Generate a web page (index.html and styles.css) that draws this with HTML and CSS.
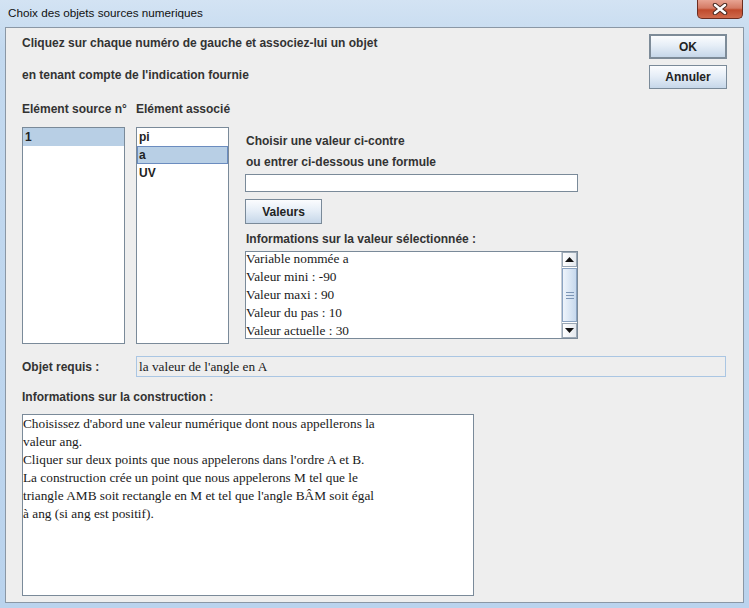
FILE: index.html
```html
<!DOCTYPE html>
<html lang="fr">
<head>
    <meta charset="UTF-8">
    <title>Choix des objets sources numeriques</title>
    <link rel="stylesheet" href="styles.css">
</head>
<body>
    <div class="window">
        <div class="titlebar">
            <span class="title">Choix des objets sources numeriques</span>
            <div class="close-btn">
                <svg width="16" height="12" viewBox="0 0 16 12">
                    <path d="M3 2 L13 10 M13 2 L3 10" stroke="#4a2a22" stroke-width="4.5" stroke-linecap="round"/>
                    <path d="M3 2 L13 10 M13 2 L3 10" stroke="#ffffff" stroke-width="2.5" stroke-linecap="round"/>
                </svg>
            </div>
        </div>

        <div class="client">
            <div class="head">
                <div class="intro">
                    <p class="line">Cliquez sur chaque numéro de gauche et associez-lui un objet</p>
                    <p class="line second">en tenant compte de l'indication fournie</p>
                </div>
                <div class="actions">
                    <button class="btn btn-default">OK</button>
                    <button class="btn">Annuler</button>
                </div>
            </div>

            <div class="picker">
                <div class="col-label">Elément source n°</div>
                <div class="col-label">Elément associé</div>
                <div></div>

                <!-- source list -->
                <ul class="list">
                    <li class="selected">1</li>
                </ul>

                <!-- associated objects -->
                <ul class="list">
                    <li>pi</li>
                    <li class="selected focused">a</li>
                    <li>UV</li>
                </ul>

                <div class="value-panel">
                    <div class="panel-line">Choisir une valeur ci-contre</div>
                    <div class="panel-line">ou entrer ci-dessous une formule</div>
                    <div class="formula-field"></div>
                    <button class="btn btn-values">Valeurs</button>
                    <div class="info-label">Informations sur la valeur sélectionnée :</div>
                    <div class="info-box">
                        <div class="info-text">
                            <div>Variable nommée a</div>
                            <div>Valeur mini : -90</div>
                            <div>Valeur maxi : 90</div>
                            <div>Valeur du pas : 10</div>
                            <div>Valeur actuelle : 30</div>
                        </div>
                        <div class="scrollbar">
                            <div class="sb-btn">
                                <svg width="9" height="5" viewBox="0 0 9 5"><path d="M0 5 L4.5 0 L9 5 Z" fill="#111"/></svg>
                            </div>
                            <div class="sb-thumb"><span></span><span></span><span></span></div>
                            <div class="sb-btn">
                                <svg width="9" height="5" viewBox="0 0 9 5"><path d="M0 0 L4.5 5 L9 0 Z" fill="#111"/></svg>
                            </div>
                        </div>
                    </div>
                </div>
            </div>

            <div class="required-row">
                <span class="required-label">Objet requis :</span>
                <div class="readonly-field">la valeur de l'angle en A</div>
            </div>

            <div class="section-label">Informations sur la construction :</div>
            <div class="construction">
                <div>Choisissez d'abord une valeur numérique dont nous appellerons la</div>
                <div>valeur ang.</div>
                <div>Cliquer sur deux points que nous appelerons dans l'ordre A et B.</div>
                <div>La construction crée un point que nous appelerons M tel que le</div>
                <div>triangle AMB soit rectangle en M et tel que l'angle BÂM soit égal</div>
                <div>à ang (si ang est positif).</div>
            </div>
        </div>
    </div>
</body>
</html>
```

FILE: styles.css
```css
:root {
    --panel-bg: #eeeeee;
    --border-grey: #7a8a99;
    --label-color: #333333;
    --select-bg: #b8cfe5;
}

* {
    box-sizing: border-box;
}

body {
    margin: 0;
    font-family: "Liberation Sans", Arial, sans-serif;
    font-size: 12px;
    background: #bcd5ee;
}

.window {
    width: 749px;
    height: 608px;
    background: linear-gradient(to bottom, #d3e3f3 0%, #c3d9ef 8%, #bad3ed 100%);
    overflow: hidden;
}

.titlebar {
    height: 27px;
    display: flex;
    justify-content: space-between;
    align-items: flex-start;
}

.title {
    margin: 6px 0 0 8px;
    font-size: 11.7px;
    color: #111;
}

.close-btn {
    width: 46px;
    height: 19px;
    margin-right: 6px;
    border: 1px solid #6b2d20;
    border-top: none;
    border-radius: 0 0 5px 5px;
    background: linear-gradient(to bottom, #e8a493 0%, #d47a64 45%, #c04a2c 55%, #cf6a4c 100%);
    display: flex;
    justify-content: center;
    align-items: center;
}

.client {
    margin-left: 5px;
    width: 739px;
    height: 576px;
    border: 1px solid #8a97a5;
    background: var(--panel-bg);
    padding-left: 16px;
    color: var(--label-color);
}

.head {
    display: flex;
    justify-content: space-between;
    padding-top: 6px;
}

.line {
    margin: 0;
    line-height: 18px;
    font-weight: bold;
}

.line.second {
    margin-top: 14px;
}

.actions {
    display: flex;
    flex-direction: column;
    gap: 6px;
    margin-right: 16px;
}

.btn {
    width: 78px;
    height: 24px;
    padding: 0;
    border: 1px solid var(--border-grey);
    background: linear-gradient(to bottom, #fbfcfe 0%, #e6eef7 45%, #c6d7e9 100%);
    font-family: "Liberation Sans", Arial, sans-serif;
    font-size: 12px;
    font-weight: bold;
    color: #222;
}

.btn-default {
    height: 25px;
    border: 2px solid #7d8b98;
}

.picker {
    display: grid;
    grid-template-columns: 103px 93px 333px;
    grid-template-rows: 18px 217px;
    column-gap: 11px;
    row-gap: 9px;
    margin-top: 11px;
}

.col-label {
    line-height: 18px;
    font-weight: bold;
    white-space: nowrap;
}

.list {
    margin: 0;
    padding: 0;
    list-style: none;
    background: #fff;
    border: 1px solid var(--border-grey);
}

.list li {
    height: 18px;
    line-height: 18px;
    padding-left: 2px;
    font-weight: bold;
    color: #222;
}

.list li.selected {
    background: var(--select-bg);
}

.list li.focused {
    border: 1px solid #6b8cbf;
    line-height: 16px;
    padding-left: 1px;
}

.value-panel {
    display: flex;
    flex-direction: column;
    align-items: flex-start;
    padding-top: 4px;
}

.picker .value-panel {
    margin-left: 5px;
    width: 333px;
}

.panel-line {
    line-height: 21px;
    font-weight: bold;
    padding-left: 1px;
}

.formula-field {
    width: 333px;
    height: 18px;
    margin-top: 1px;
    background: #fff;
    border: 1px solid var(--border-grey);
}

.btn-values {
    margin-top: 7px;
    width: 77px;
    height: 25px;
}

.info-label {
    margin-top: 6px;
    line-height: 18px;
    font-weight: bold;
    padding-left: 1px;
}

.info-box {
    margin-top: 3px;
    width: 333px;
    height: 88px;
    display: flex;
    background: #fff;
    border: 1px solid var(--border-grey);
}

.info-text,
.construction {
    font-family: "Liberation Serif", "Times New Roman", serif;
    font-size: 13.3px;
    line-height: 18px;
    color: #1a1a1a;
}

.info-text {
    flex: 1;
    margin-top: -2px;
}

.scrollbar {
    width: 16px;
    display: flex;
    flex-direction: column;
    border-left: 1px solid #c5cdd6;
}

.sb-btn {
    height: 15px;
    display: flex;
    justify-content: center;
    align-items: center;
    background: linear-gradient(to right, #ffffff, #e4e9ef);
    border: 1px solid #9aa7b4;
}

.sb-thumb {
    flex: 1;
    margin: 1px 0;
    display: flex;
    flex-direction: column;
    justify-content: center;
    align-items: center;
    gap: 2px;
    border: 1px solid #8aa3c2;
    background: linear-gradient(to right, #eef4fb, #c7d9ed);
}

.sb-thumb span {
    width: 8px;
    height: 1px;
    background: #7c95b5;
}

.required-row {
    display: flex;
    align-items: center;
    margin-top: 12px;
}

.required-label {
    width: 114px;
    font-weight: bold;
}

.readonly-field {
    width: 590px;
    height: 21px;
    padding-left: 2px;
    line-height: 19px;
    border: 1px solid #aac6e3;
    font-family: "Liberation Serif", "Times New Roman", serif;
    font-size: 13.3px;
    color: #1a1a1a;
}

.section-label {
    margin-top: 11px;
    line-height: 18px;
    font-weight: bold;
}

.construction {
    margin-top: 8px;
    width: 452px;
    height: 182px;
    background: #fff;
    border: 1px solid var(--border-grey);
}
```
